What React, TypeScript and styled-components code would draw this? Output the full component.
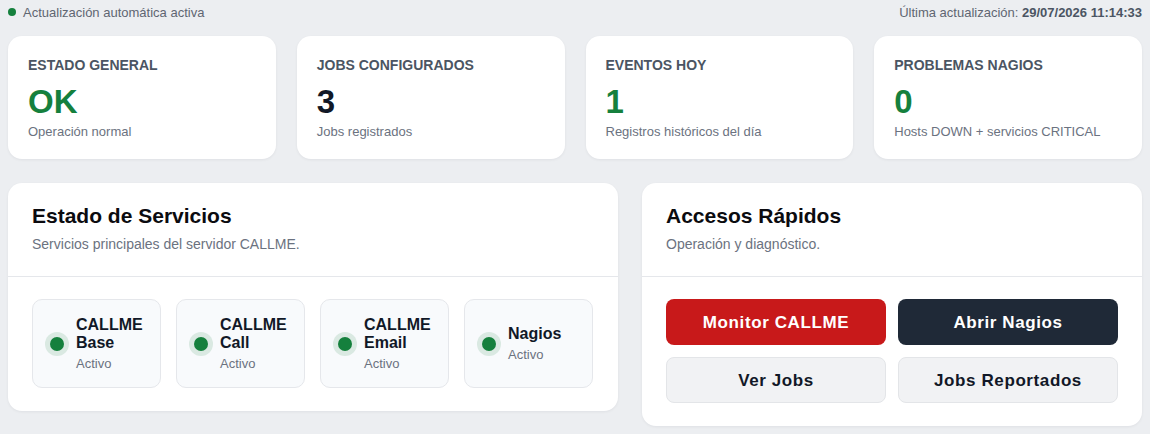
import React from "react";
import styled, { createGlobalStyle } from "styled-components";

const GlobalStyle = createGlobalStyle`
  html, body {
    margin: 0;
    padding: 0;
    background: #eceef1;
    font-family: "Liberation Sans", Arial, sans-serif;
  }
  * { box-sizing: border-box; }
`;

const Page = styled.div`
  padding: 0 8px 8px;
  display: flex;
  flex-direction: column;
`;

const StatusBar = styled.div`
  height: 24px;
  display: flex;
  align-items: center;
  justify-content: space-between;
  font-size: 13px;
  color: #5f6672;
`;

const LiveTag = styled.span`
  display: flex;
  align-items: center;
  gap: 7px;
`;

const LiveDot = styled.span`
  width: 8px;
  height: 8px;
  border-radius: 50%;
  background: #15803d;
`;

const Stamp = styled.span`
  b { color: #4b5563; }
`;

const StatsGrid = styled.div`
  display: grid;
  grid-template-columns: repeat(4, 1fr);
  gap: 21px;
  margin-top: 12px;
`;

const StatCard = styled.div`
  background: #fff;
  border-radius: 14px;
  height: 123px;
  padding: 21px 20px 0;
  box-shadow: 0 1px 3px rgba(15, 23, 42, 0.06);
`;

const StatLabel = styled.div`
  font-size: 14px;
  font-weight: 700;
  color: #4b5563;
  line-height: 16px;
`;

const StatValue = styled.div<{ $tone: string }>`
  font-size: 33px;
  font-weight: 700;
  line-height: 36px;
  margin-top: 11px;
  color: ${(p) => p.$tone};
`;

const StatNote = styled.div`
  font-size: 13px;
  color: #6b7280;
  line-height: 16px;
  margin-top: 4px;
`;

const Columns = styled.div`
  display: grid;
  grid-template-columns: 610px 1fr;
  gap: 24px;
  align-items: start;
  margin-top: 24px;
`;

const Panel = styled.section`
  background: #fff;
  border-radius: 14px;
  box-shadow: 0 1px 3px rgba(15, 23, 42, 0.06);
`;

const PanelHead = styled.div`
  padding: 21px 24px 24px;
  border-bottom: 1px solid #e5e7eb;
`;

const PanelTitle = styled.h2`
  margin: 0;
  font-size: 21px;
  line-height: 24px;
  font-weight: 700;
  color: #0b0b0f;
`;

const PanelSub = styled.p`
  margin: 8px 0 0;
  font-size: 14px;
  line-height: 16px;
  color: #6b7280;
`;

const PanelBody = styled.div`
  padding: 22px 24px 23px;
`;

const ServiceGrid = styled.div`
  display: grid;
  grid-template-columns: repeat(4, 129px);
  gap: 15px;
`;

const ServiceCard = styled.div`
  display: flex;
  align-items: center;
  gap: 7px;
  min-height: 89px;
  padding: 10px 12px;
  background: #f8fafc;
  border: 1px solid #e5e7eb;
  border-radius: 10px;
`;

const StatusRing = styled.span<{ $color: string }>`
  flex: none;
  width: 24px;
  height: 24px;
  border-radius: 50%;
  background: ${(p) => p.$color}22;
  display: flex;
  align-items: center;
  justify-content: center;
  &::after {
    content: "";
    width: 14px;
    height: 14px;
    border-radius: 50%;
    background: ${(p) => p.$color};
  }
`;

const ServiceText = styled.div`
  display: flex;
  flex-direction: column;
`;

const ServiceName = styled.span`
  font-size: 16px;
  font-weight: 700;
  line-height: 18px;
  color: #111827;
`;

const ServiceState = styled.span`
  font-size: 13px;
  line-height: 16px;
  color: #6b7280;
  margin-top: 4px;
`;

const ButtonGrid = styled.div`
  display: grid;
  grid-template-columns: 1fr 1fr;
  gap: 12px;
`;

const ActionButton = styled.button<{ $variant: "red" | "dark" | "light" }>`
  height: 46px;
  padding: 2px 0 0;
  border-radius: 8px;
  font-family: inherit;
  font-size: 17px;
  font-weight: 700;
  letter-spacing: 0.6px;
  cursor: pointer;
  border: 1px solid
    ${(p) => (p.$variant === "light" ? "#e3e5e8" : "transparent")};
  background: ${(p) =>
    p.$variant === "red" ? "#c8191a" : p.$variant === "dark" ? "#1f2937" : "#f1f2f4"};
  color: ${(p) => (p.$variant === "light" ? "#111827" : "#fff")};
`;

const stats = [
  { label: "ESTADO GENERAL", value: "OK", tone: "#15803d", note: "Operación normal" },
  { label: "JOBS CONFIGURADOS", value: "3", tone: "#111827", note: "Jobs registrados" },
  { label: "EVENTOS HOY", value: "1", tone: "#15803d", note: "Registros históricos del día" },
  { label: "PROBLEMAS NAGIOS", value: "0", tone: "#15803d", note: "Hosts DOWN + servicios CRITICAL" },
];

const services = ["CALLME Base", "CALLME Call", "CALLME Email", "Nagios"];

const actions: { label: string; variant: "red" | "dark" | "light" }[] = [
  { label: "Monitor CALLME", variant: "red" },
  { label: "Abrir Nagios", variant: "dark" },
  { label: "Ver Jobs", variant: "light" },
  { label: "Jobs Reportados", variant: "light" },
];

export default function App() {
  return (
    <>
      <GlobalStyle />
      <Page>
        <StatusBar>
          <LiveTag>
            <LiveDot />
            Actualización automática activa
          </LiveTag>
          <Stamp>
            Última actualización: <b>29/07/2026 11:14:33</b>
          </Stamp>
        </StatusBar>

        <StatsGrid>
          {stats.map((s) => (
            <StatCard key={s.label}>
              <StatLabel>{s.label}</StatLabel>
              <StatValue $tone={s.tone}>{s.value}</StatValue>
              <StatNote>{s.note}</StatNote>
            </StatCard>
          ))}
        </StatsGrid>

        <Columns>
          <Panel>
            <PanelHead>
              <PanelTitle>Estado de Servicios</PanelTitle>
              <PanelSub>Servicios principales del servidor CALLME.</PanelSub>
            </PanelHead>
            <PanelBody>
              <ServiceGrid>
                {services.map((name) => (
                  <ServiceCard key={name}>
                    <StatusRing $color="#15803d" />
                    <ServiceText>
                      <ServiceName>{name}</ServiceName>
                      <ServiceState>Activo</ServiceState>
                    </ServiceText>
                  </ServiceCard>
                ))}
              </ServiceGrid>
            </PanelBody>
          </Panel>

          <Panel>
            <PanelHead>
              <PanelTitle>Accesos Rápidos</PanelTitle>
              <PanelSub>Operación y diagnóstico.</PanelSub>
            </PanelHead>
            <PanelBody>
              <ButtonGrid>
                {actions.map((a) => (
                  <ActionButton key={a.label} $variant={a.variant}>
                    {a.label}
                  </ActionButton>
                ))}
              </ButtonGrid>
            </PanelBody>
          </Panel>
        </Columns>
      </Page>
    </>
  );
}
